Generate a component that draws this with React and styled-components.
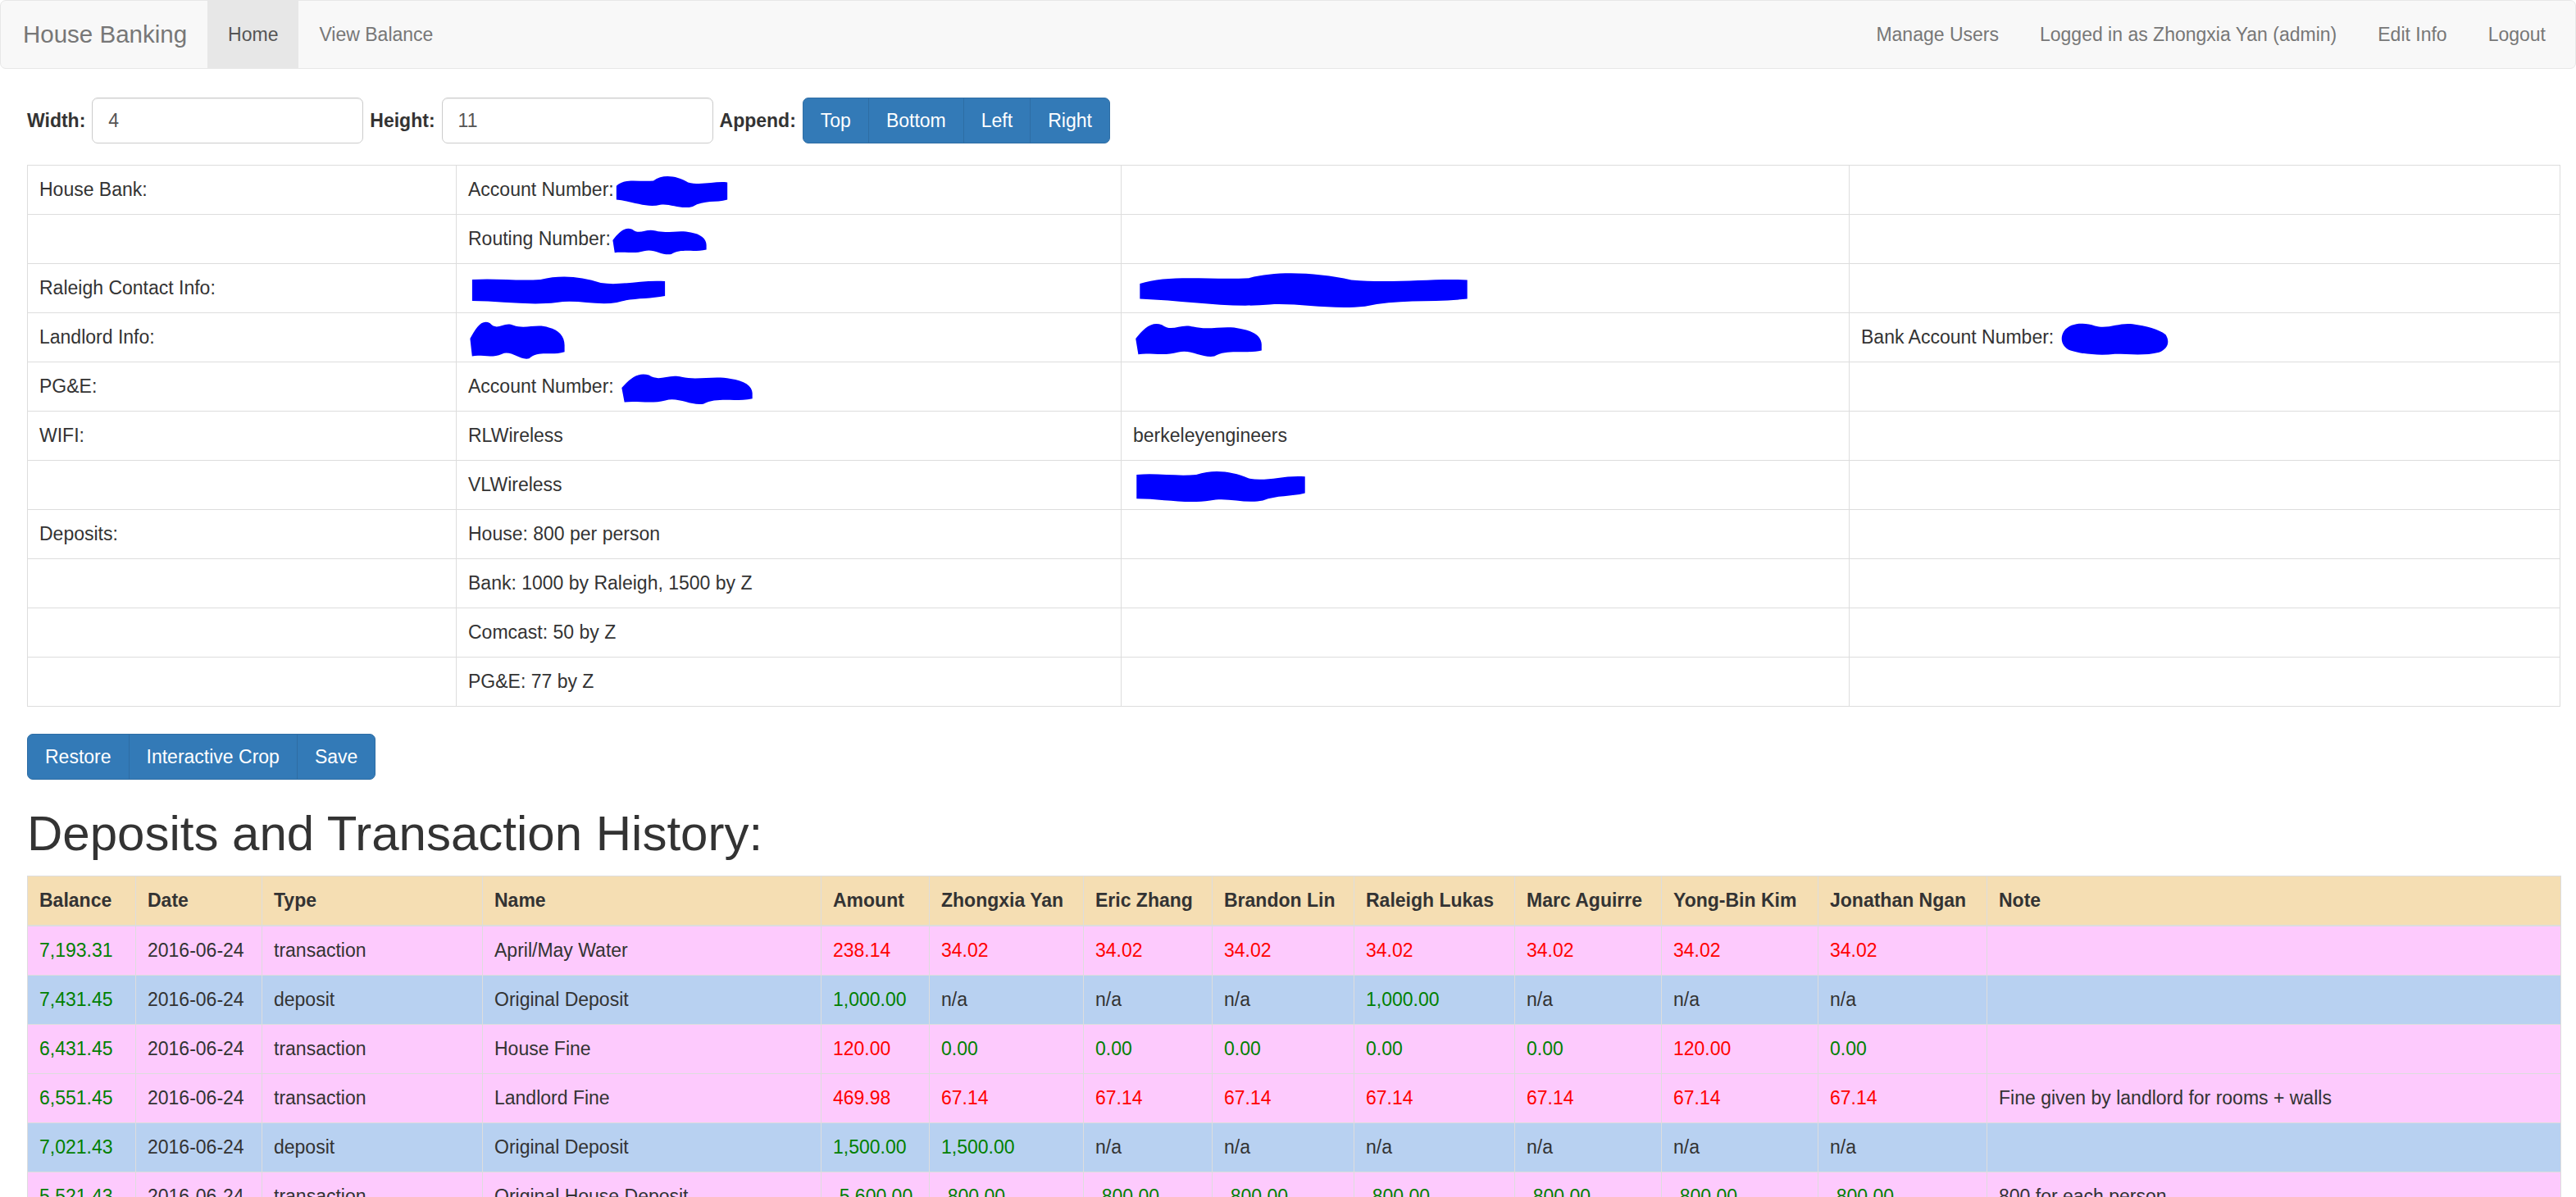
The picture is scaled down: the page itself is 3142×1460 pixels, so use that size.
import React from "react";
import styled, { createGlobalStyle } from "styled-components";

const GlobalStyle = createGlobalStyle`
  html, body {
    margin: 0;
    padding: 0;
    background: #fff;
  }
  body {
    font-family: "Liberation Sans", Arial, Helvetica, sans-serif;
    font-size: 23px;
    line-height: 33px;
    color: #333;
  }
  * {
    box-sizing: border-box;
  }
`;

const Navbar = styled.nav`
  display: flex;
  align-items: stretch;
  height: 84px;
  background: #f8f8f8;
  border: 1px solid #e7e7e7;
  border-radius: 7px;
  margin-bottom: 35px;
`;
const Brand = styled.a`
  font-size: 29.5px;
  line-height: 82px;
  color: #777;
  padding: 0 25px 0 27px;
`;
const NavLink = styled.a`
  display: block;
  line-height: 82px;
  padding: 0 25px;
  color: ${(props) => (props.active ? "#555" : "#777")};
  background: ${(props) => (props.active ? "#e7e7e7" : "transparent")};
`;
const NavRight = styled.div`
  display: flex;
  margin-left: auto;
  padding-right: 11px;
`;

const Content = styled.div`
  padding: 0 19px 0 33px;
`;

const Toolbar = styled.form`
  display: flex;
  align-items: center;
  gap: 8px;
  height: 56px;
  margin-bottom: 26px;
`;
const Label = styled.label`
  font-weight: bold;
`;
const Input = styled.input`
  width: 331px;
  height: 56px;
  padding: 0 19px;
  font: inherit;
  color: #555;
  border: 1px solid #ccc;
  border-radius: 7px;
  box-shadow: inset 0 1px 1px rgba(0, 0, 0, 0.075);
`;

const BtnGroup = styled.div`
  display: flex;
`;
const Button = styled.button`
  height: 56px;
  padding: 0 21px;
  font: inherit;
  color: #fff;
  background: #337ab7;
  border: 1px solid #2e6da4;
  border-radius: 0;
  &:first-child {
    border-radius: 7px 0 0 7px;
  }
  &:last-child {
    border-radius: 0 7px 7px 0;
  }
  & + & {
    margin-left: -1px;
  }
`;

const InfoTable = styled.table`
  width: 3090px;
  border-collapse: collapse;
  table-layout: fixed;
  margin-bottom: 33px;
  & td {
    border: 1px solid #ddd;
    padding: 13px 14px;
    height: 60px;
    vertical-align: top;
    white-space: nowrap;
  }
`;

const Heading = styled.h1`
  font-size: 60px;
  font-weight: 500;
  line-height: 65px;
  margin: 33px 0 19px;
`;

const HistoryTable = styled.table`
  width: 3090px;
  border-collapse: collapse;
  table-layout: fixed;
  & th,
  & td {
    border: 1px solid #ddd;
    padding: 13px 14px;
    text-align: left;
    vertical-align: top;
    white-space: nowrap;
  }
  & th {
    background: #f5deb3;
    border-bottom: 2px solid #ddd;
  }
`;
const Row = styled.tr`
  background: ${(props) => (props.type === "deposit" ? "#b8d1f1" : "#fdcafd")};
`;
const Money = styled.span`
  color: ${(props) => (props.neg ? "#ff0000" : "#008000")};
`;

const Scribble = styled.svg`
  display: inline-block;
  vertical-align: middle;
  margin: -12px 0;
`;

const blobs = [
  "M2 14 C10 4 22 10 34 8 C42 0 54 2 64 10 C76 14 88 8 98 10 L98 30 C88 34 78 30 68 38 C58 42 48 34 40 36 C28 40 16 32 2 30 Z",
  "M2 20 C8 10 14 2 22 6 C30 14 36 4 46 8 C58 12 70 6 82 10 C92 12 98 18 98 26 L98 32 C84 36 72 30 62 38 C52 40 44 30 34 34 C24 38 12 34 4 36 Z",
  "M2 8 C14 6 24 10 36 8 C46 2 56 4 66 12 C76 16 86 8 98 10 L98 28 C90 32 82 30 74 36 C64 40 54 32 44 36 C30 40 16 34 2 34 Z",
  "M4 12 C10 2 22 2 32 6 C44 10 54 2 66 4 C78 6 90 10 96 16 C100 24 98 32 90 36 C78 40 64 38 50 38 C36 40 20 38 10 34 C2 30 0 20 4 12 Z",
];

const Redact = ({ w, h, v = 0 }) => (
  <Scribble width={w} height={h} viewBox="0 0 100 40" preserveAspectRatio="none">
    <path d={blobs[v]} fill="#0000ff" />
  </Scribble>
);

const infoRows = [
  ["House Bank:", <>Account Number:<Redact w={141} h={42} v={0} /></>, "", ""],
  ["", <>Routing Number:<Redact w={119} h={38} v={1} /></>, "", ""],
  ["Raleigh Contact Info:", <Redact w={245} h={40} v={2} />, <Redact w={416} h={46} v={0} />, ""],
  [
    "Landlord Info:",
    <Redact w={120} h={54} v={1} />,
    <Redact w={160} h={48} v={1} />,
    <>Bank Account Number: <Redact w={135} h={43} v={3} /></>,
  ],
  ["PG&E:", <>Account Number: <Redact w={166} h={44} v={1} /></>, "", ""],
  ["WIFI:", "RLWireless", "berkeleyengineers", ""],
  ["", "VLWireless", <Redact w={214} h={45} v={2} />, ""],
  ["Deposits:", "House: 800 per person", "", ""],
  ["", "Bank: 1000 by Raleigh, 1500 by Z", "", ""],
  ["", "Comcast: 50 by Z", "", ""],
  ["", "PG&E: 77 by Z", "", ""],
];

const people = [
  "Zhongxia Yan",
  "Eric Zhang",
  "Brandon Lin",
  "Raleigh Lukas",
  "Marc Aguirre",
  "Yong-Bin Kim",
  "Jonathan Ngan",
];
const headers = ["Balance", "Date", "Type", "Name", "Amount", ...people, "Note"];
const widths = [132, 154, 269, 413, 132, 188, 157, 173, 196, 179, 191, 206, 700];

// [value, isRed] pairs; plain strings are n/a
const history = [
  {
    balance: "7,193.31",
    type: "transaction",
    name: "April/May Water",
    amount: ["238.14", true],
    shares: Array(7).fill(["34.02", true]),
    note: "",
  },
  {
    balance: "7,431.45",
    type: "deposit",
    name: "Original Deposit",
    amount: ["1,000.00", false],
    shares: ["n/a", "n/a", "n/a", ["1,000.00", false], "n/a", "n/a", "n/a"],
    note: "",
  },
  {
    balance: "6,431.45",
    type: "transaction",
    name: "House Fine",
    amount: ["120.00", true],
    shares: [
      ["0.00", false],
      ["0.00", false],
      ["0.00", false],
      ["0.00", false],
      ["0.00", false],
      ["120.00", true],
      ["0.00", false],
    ],
    note: "",
  },
  {
    balance: "6,551.45",
    type: "transaction",
    name: "Landlord Fine",
    amount: ["469.98", true],
    shares: Array(7).fill(["67.14", true]),
    note: "Fine given by landlord for rooms + walls",
  },
  {
    balance: "7,021.43",
    type: "deposit",
    name: "Original Deposit",
    amount: ["1,500.00", false],
    shares: [["1,500.00", false], "n/a", "n/a", "n/a", "n/a", "n/a", "n/a"],
    note: "",
  },
  {
    balance: "5,521.43",
    type: "transaction",
    name: "Original House Deposit",
    amount: ["-5,600.00", false],
    shares: Array(7).fill(["-800.00", false]),
    note: "800 for each person",
  },
];

const Cell = ({ value }) =>
  Array.isArray(value) ? (
    <td>
      <Money neg={value[1]}>{value[0]}</Money>
    </td>
  ) : (
    <td>{value}</td>
  );

const App = () => (
  <>
    <GlobalStyle />
    <Navbar>
      <Brand>House Banking</Brand>
      <NavLink active>Home</NavLink>
      <NavLink>View Balance</NavLink>
      <NavRight>
        <NavLink>Manage Users</NavLink>
        <NavLink>Logged in as Zhongxia Yan (admin)</NavLink>
        <NavLink>Edit Info</NavLink>
        <NavLink>Logout</NavLink>
      </NavRight>
    </Navbar>
    <Content>
      <Toolbar>
        <Label>Width:</Label>
        <Input defaultValue="4" />
        <Label>Height:</Label>
        <Input defaultValue="11" />
        <Label>Append:</Label>
        <BtnGroup>
          <Button type="button">Top</Button>
          <Button type="button">Bottom</Button>
          <Button type="button">Left</Button>
          <Button type="button">Right</Button>
        </BtnGroup>
      </Toolbar>

      <InfoTable>
        <colgroup>
          <col style={{ width: 523 }} />
          <col style={{ width: 811 }} />
          <col style={{ width: 888 }} />
          <col />
        </colgroup>
        <tbody>
          {infoRows.map((row, i) => (
            <tr key={i}>
              {row.map((c, j) => (
                <td key={j}>{c}</td>
              ))}
            </tr>
          ))}
        </tbody>
      </InfoTable>

      <BtnGroup>
        <Button type="button">Restore</Button>
        <Button type="button">Interactive Crop</Button>
        <Button type="button">Save</Button>
      </BtnGroup>

      <Heading>Deposits and Transaction History:</Heading>

      <HistoryTable>
        <colgroup>
          {widths.map((w, i) => (
            <col key={i} style={{ width: w }} />
          ))}
        </colgroup>
        <thead>
          <tr>
            {headers.map((h) => (
              <th key={h}>{h}</th>
            ))}
          </tr>
        </thead>
        <tbody>
          {history.map((r, i) => (
            <Row key={i} type={r.type}>
              <Cell value={[r.balance, false]} />
              <td>2016-06-24</td>
              <td>{r.type}</td>
              <td>{r.name}</td>
              <Cell value={r.amount} />
              {r.shares.map((s, j) => (
                <Cell key={j} value={s} />
              ))}
              <td>{r.note}</td>
            </Row>
          ))}
        </tbody>
      </HistoryTable>
    </Content>
  </>
);

export default App;
